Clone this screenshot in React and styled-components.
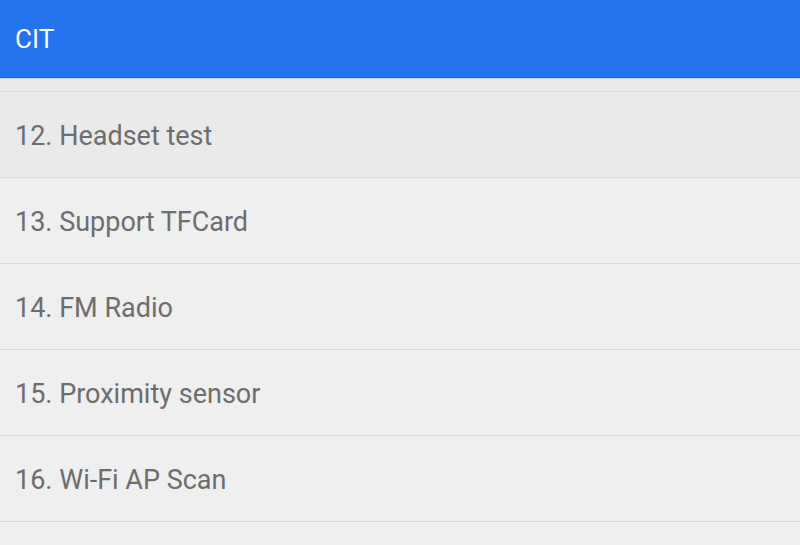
import React from 'react';
import styled, { createGlobalStyle } from 'styled-components';

const GlobalStyle = createGlobalStyle`
  body {
    margin: 0;
    background: #efefef;
    font-family: Roboto, "Noto Sans", sans-serif;
  }
`;

const items = [
  { id: 12, name: 'Headset test', pressed: true },
  { id: 13, name: 'Support TFCard' },
  { id: 14, name: 'FM Radio' },
  { id: 15, name: 'Proximity sensor' },
  { id: 16, name: 'Wi-Fi AP Scan' },
];

const App = () => {
  return (
    <Screen>
      <GlobalStyle />
      <AppBar>
        <Title>CIT</Title>
      </AppBar>
      <List>
        {items.map((item) => (
          <Row key={item.id} pressed={item.pressed}>
            <Label>{item.id}. {item.name}</Label>
          </Row>
        ))}
      </List>
    </Screen>
  );
};

export default App;

const Screen = styled.div`
  width: 800px;
  height: 545px;
  overflow: hidden;
  background: #efefef;
`;

const AppBar = styled.div`
  display: flex;
  align-items: center;
  height: 77px;
  padding-left: 15px;
  background-color: #2474ee;
  border-bottom: 1px solid #1f66d6;
  box-shadow: 0 1px 0 #b9d3f7;
  margin-bottom: 1px;
`;

const Title = styled.div`
  color: #ffffff;
  font-size: 26px;
`;

const List = styled.div`
  display: flex;
  flex-direction: column;
  padding-top: 12px;
  background-color: #ebebeb;
`;

const Row = styled.div`
  display: flex;
  align-items: center;
  height: 85px;
  padding-left: 15px;
  border-top: 1px solid #dadada;
  background-color: ${(p) => (p.pressed ? '#eaeaea' : '#efefef')};

  &:last-child {
    border-bottom: 1px solid #dadada;
  }
`;

const Label = styled.div`
  color: #6d6d6d;
  font-size: 27px;
  padding-top: 3px;
`;
